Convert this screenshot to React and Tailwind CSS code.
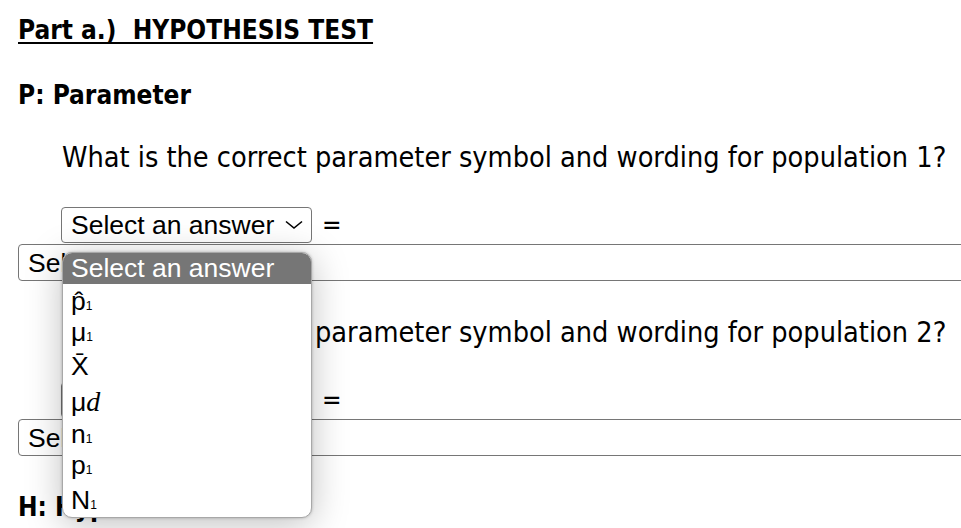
// App.jsx
const options = [
  { key: "phat", h: "h-[33px] pt-[2px]", label: <>p̂<span className="text-[12px]">1</span></> },
  { key: "mu", h: "h-[34px]", label: <>μ<span className="text-[12px]">1</span></> },
  { key: "xbar", h: "h-[36px]", label: <>X̄</> },
  {
    key: "mud",
    h: "h-[32px]",
    label: (
      <>
        μ<span className="font-['Liberation_Serif',serif] italic text-[28px]">d</span>
      </>
    ),
  },
  { key: "n", h: "h-[31px]", label: <>n<span className="text-[12px]">1</span></> },
  { key: "p", h: "h-[35px]", label: <>p<span className="text-[12px]">1</span></> },
  { key: "N", h: "h-[34px]", label: <>N<span className="text-[12px]">1</span></> },
];

const Chevron = () => (
  <svg width="18" height="10" viewBox="0 0 18 10" fill="none" className="shrink-0">
    <path d="M1 1.5 L9 8 L17 1.5" stroke="#000" strokeWidth="1.6" />
  </svg>
);

const SmallSelect = () => (
  <div className="h-[36px] w-[251px] flex items-center justify-between rounded-[4px] border border-[#767676] pl-[9px] pr-[8px] font-['Liberation_Sans',Arial,sans-serif] text-[26.5px] leading-[30px] bg-white">
    <span>Select an answer</span>
    <Chevron />
  </div>
);

const WideSelect = () => (
  <div className="mt-[1px] h-[37px] w-[980px] flex items-center rounded-[4px] border border-[#767676] pl-[9px] font-['Liberation_Sans',Arial,sans-serif] text-[26.5px] leading-[30px] bg-white">
    Select an answer
  </div>
);

const Question = ({ n }) => (
  <>
    <p className="ml-[44px] leading-[34px]">
      What is the correct parameter symbol and wording for population {n}?
    </p>
    <div className="mt-[33px] ml-[43px] flex items-center gap-[10px]">
      <SmallSelect />
      <span className="leading-[34px] text-[26px]">=</span>
    </div>
    <WideSelect />
  </>
);

export default function App() {
  return (
    <div className="relative w-[961px] h-[528px] overflow-hidden bg-white text-black font-['DejaVu_Sans_Condensed','DejaVu_Sans',sans-serif] font-stretch-condensed text-[28.6px]">
      <div className="pl-[18px] pt-[13px]">
        <h2 className="text-[26px] font-bold underline underline-offset-[3px] decoration-[2px] leading-[34px] whitespace-pre">
          Part a.)  HYPOTHESIS TEST
        </h2>
        <h3 className="mt-[31px] text-[26px] font-bold leading-[34px]">P: Parameter</h3>
        <div className="mt-[28px]">
          <Question n={1} />
        </div>
        <div className="mt-[34px]">
          <Question n={2} />
        </div>
        <h3 className="mt-[34px] text-[26px] font-bold leading-[34px]">H: Hypotheses</h3>
      </div>

      {/* open dropdown list of the first select */}
      <div className="absolute left-[62px] top-[252px] w-[250px] h-[266px] overflow-hidden rounded-[10px] border border-[#a8a8a8] bg-white shadow-[0_0_3px_rgba(0,0,0,0.25),0_6px_36px_rgba(0,0,0,0.25)] font-['Liberation_Sans',Arial,sans-serif] text-[26.5px] leading-[30px]">
        <div className="h-[31px] bg-[#767676] text-white pl-[8px]">Select an answer</div>
        {options.map((o) => (
          <div key={o.key} className={`${o.h} pl-[8px]`}>
            {o.label}
          </div>
        ))}
      </div>
    </div>
  );
}
